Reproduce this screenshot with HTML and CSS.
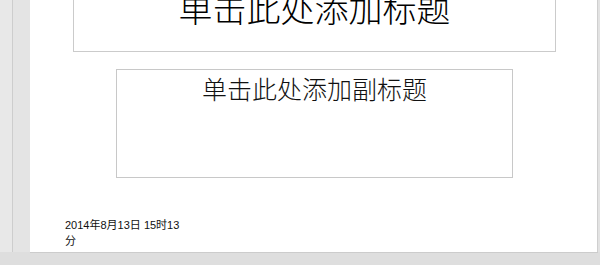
FILE: index.html
```html
<!DOCTYPE html>
<html lang="zh-CN">
<head>
<meta charset="utf-8">
<link rel="stylesheet" href="styles.css">
</head>
<body>
<div class="workspace">
  <div class="strip-light"></div>
  <div class="strip-line"></div>
  <div class="strip-gap"></div>
  <div class="slide">
    <div class="title-box"><span class="title-text">单击此处添加标题</span></div>
    <div class="subtitle-box"><span class="subtitle-text">单击此处添加副标题</span></div>
    <div class="date">2014年8月13日 15时13分</div>
  </div>
</div>
</body>
</html>
```
FILE: styles.css
```css
html, body {
  margin: 0;
  padding: 0;
}
body {
  width: 600px;
  height: 265px;
  overflow: hidden;
  background: #dedede;
}
.workspace {
  display: flex;
  height: 252px;
  background: #e2e2e2;
}
.strip-light {
  width: 12px;
  background: #e8e8e8;
}
.strip-line {
  width: 1px;
  background: #cdcdcd;
}
.strip-gap {
  width: 17px;
  background: #e4e4e4;
}
.slide {
  width: 567px;
  border-right: 1px solid #cfcfcf;
  background: #ffffff;
  display: flex;
  flex-direction: column;
  align-items: flex-start;
  overflow: hidden;
  box-shadow: 0 1px 0 #cccccc;
}
.title-box {
  box-sizing: border-box;
  margin-left: 43px;
  margin-top: -60px;
  width: 483px;
  height: 112px;
  border: 1px solid #cbcbcb;
  display: flex;
  align-items: flex-end;
  justify-content: center;
  padding-bottom: 23px;
}
.title-text {
  font-family: "Noto Sans CJK SC", sans-serif;
  font-weight: 300;
  font-size: 34px;
  line-height: 40px;
  color: #000;
}
.subtitle-box {
  box-sizing: border-box;
  margin-left: 86px;
  margin-top: 17px;
  width: 397px;
  height: 109px;
  border: 1px solid #c8c8c8;
  display: flex;
  justify-content: center;
  padding-top: 3px;
}
.subtitle-text {
  font-family: "Noto Sans CJK SC", sans-serif;
  font-weight: 300;
  font-size: 25px;
  line-height: 30px;
  color: #111;
}
.date {
  margin-left: 35px;
  margin-top: 39px;
  width: 118px;
  font-family: "Liberation Sans", "Noto Sans CJK SC", sans-serif;
  font-size: 11px;
  line-height: 16px;
  color: #111;
}
```
